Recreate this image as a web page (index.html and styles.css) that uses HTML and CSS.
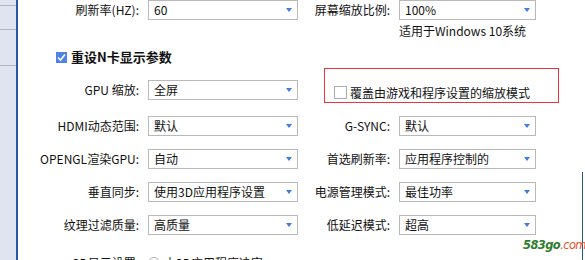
FILE: index.html
```html
<!DOCTYPE html>
<html lang="zh-CN">
<head>
<meta charset="utf-8">
<title>N卡设置</title>
<link rel="stylesheet" href="styles.css">
</head>
<body>
<div class="window">
  <aside class="sidebar">
    <div class="side-line l1"></div>
    <div class="side-line l2"></div>
    <div class="side-line l3"></div>
  </aside>
  <main class="content">
    <div class="row">
      <label class="lbl">刷新率(HZ):</label>
      <div class="sel">60<span class="arr"></span></div>
      <label class="lbl">屏幕缩放比例:</label>
      <div class="sel sel-r">100%<span class="arr"></span></div>
    </div>
    <div class="note">适用于Windows 10系统</div>
    <div class="title"><span class="chk on"><svg viewBox="0 0 11 11" width="11" height="11"><path d="M2 5.5 L4.5 8 L9 2.5" fill="none" stroke="#fff" stroke-width="1.6"/></svg></span>重设N卡显示参数</div>
    <div class="row row-tall">
      <label class="lbl">GPU 缩放:</label>
      <div class="sel">全屏<span class="arr"></span></div>
      <div class="override"><span class="chk"></span>覆盖由游戏和程序设置的缩放模式</div>
    </div>
    <div class="row gap">
      <label class="lbl">HDMI动态范围:</label>
      <div class="sel">默认<span class="arr"></span></div>
      <label class="lbl">G-SYNC:</label>
      <div class="sel sel-r">默认<span class="arr"></span></div>
    </div>
    <div class="row gap">
      <label class="lbl">OPENGL渲染GPU:</label>
      <div class="sel">自动<span class="arr"></span></div>
      <label class="lbl">首选刷新率:</label>
      <div class="sel sel-r">应用程序控制的<span class="arr"></span></div>
    </div>
    <div class="row gap">
      <label class="lbl">垂直同步:</label>
      <div class="sel">使用3D应用程序设置<span class="arr"></span></div>
      <label class="lbl">电源管理模式:</label>
      <div class="sel sel-r">最佳功率<span class="arr"></span></div>
    </div>
    <div class="row gap">
      <label class="lbl">纹理过滤质量:</label>
      <div class="sel">高质量<span class="arr"></span></div>
      <label class="lbl">低延迟模式:</label>
      <div class="sel sel-r">超高<span class="arr"></span></div>
    </div>
    <div class="row last">
      <label class="lbl">3D显示设置:</label>
      <div class="radio-opt"><span class="radio"></span>由3D应用程序决定</div>
    </div>
  </main>
  <div class="edge"></div>
  <div class="wm"><span class="wm-g">583go</span><span class="wm-r">.com</span></div>
</div>
</body>
</html>
```

FILE: styles.css
```css
* { box-sizing: border-box; }
html, body { margin: 0; padding: 0; background: #fff; }
body {
  font-family: "Noto Sans CJK SC", "Noto Sans", sans-serif;
  font-size: 12px;
  color: #111;
  width: 585px;
  height: 260px;
  overflow: hidden;
}
.window {
  position: relative;
  display: flex;
  width: 585px;
  height: 260px;
}
.sidebar {
  position: relative;
  width: 18px;
  flex: 0 0 18px;
  background: #e0e4f0;
  border-right: 2px solid #2a55a5;
}
.side-line {
  position: absolute;
  left: 0;
  width: 16px;
  height: 1px;
  background: #b2b6c2;
}
.l1 { top: 5px; }
.l2 { top: 29px; }
.l3 { top: 65px; }

.content {
  flex: 1;
  display: flex;
  flex-direction: column;
}
.row {
  display: grid;
  grid-template-columns: 130px 150px 101px 137px;
  align-items: center;
  height: 20px;
}
.row.gap { margin-top: 13px; }
.row-tall {
  height: 35px;
  margin-top: 3px;
  align-items: start;
}
.row-tall .lbl, .row-tall .sel { margin-top: 12px; }
.row.last { margin-top: 18px; }

.lbl {
  text-align: right;
  padding-right: 9px;
  white-space: nowrap;
  line-height: 20px;
  color: #111;
}
.sel {
  position: relative;
  height: 20px;
  border: 1px solid #b9b9b9;
  background: #fff;
  padding-left: 5px;
  line-height: 18px;
  white-space: nowrap;
  color: #111;
}
.arr {
  position: absolute;
  right: 5px;
  top: 7px;
  width: 0;
  height: 0;
  border-left: 3.5px solid transparent;
  border-right: 3.5px solid transparent;
  border-top: 4px solid #3f7be0;
}
.note {
  margin: 3px 0 0 381px;
  line-height: 16px;
  color: #111;
}
.title {
  display: flex;
  align-items: center;
  margin: 10px 0 0 38px;
  font-size: 13px;
  font-weight: bold;
  line-height: 16px;
  color: #111;
}
.chk {
  display: inline-block;
  flex: 0 0 auto;
  width: 13px;
  height: 13px;
  border: 1px solid #ababab;
  background: #fff;
  margin-right: 4px;
}
.chk.on {
  width: 11px;
  height: 11px;
  border: none;
  background: #4d82e6;
  margin-right: 4px;
  display: flex;
}
.override {
  grid-column: 3 / 5;
  margin-left: 26px;
  width: 235px;
  height: 35px;
  border: 1px solid #e8343a;
  display: flex;
  align-items: center;
  padding: 14px 0 0 9px;
  font-size: 12px;
  line-height: 16px;
  white-space: nowrap;
  color: #111;
}
.override .chk { margin-right: 3px; }
.radio-opt {
  display: flex;
  align-items: center;
  line-height: 20px;
  white-space: nowrap;
}
.radio {
  display: inline-block;
  width: 12px;
  height: 12px;
  border: 1px solid #b0b0b0;
  border-radius: 50%;
  margin-right: 4px;
  background: #fff;
}
.edge {
  position: absolute;
  left: 582px;
  top: 172px;
  bottom: 0;
  width: 1px;
  background: #2a55a5;
}
.wm {
  position: absolute;
  left: 523px;
  top: 237px;
  font-family: "DejaVu Sans", sans-serif;
  font-size: 11.5px;
  font-style: italic;
  font-weight: bold;
  line-height: 16px;
  letter-spacing: -0.6px;
}
.wm-g { color: #2e7d2e; }
.wm-r { color: #e8502a; font-weight: normal; }
```
